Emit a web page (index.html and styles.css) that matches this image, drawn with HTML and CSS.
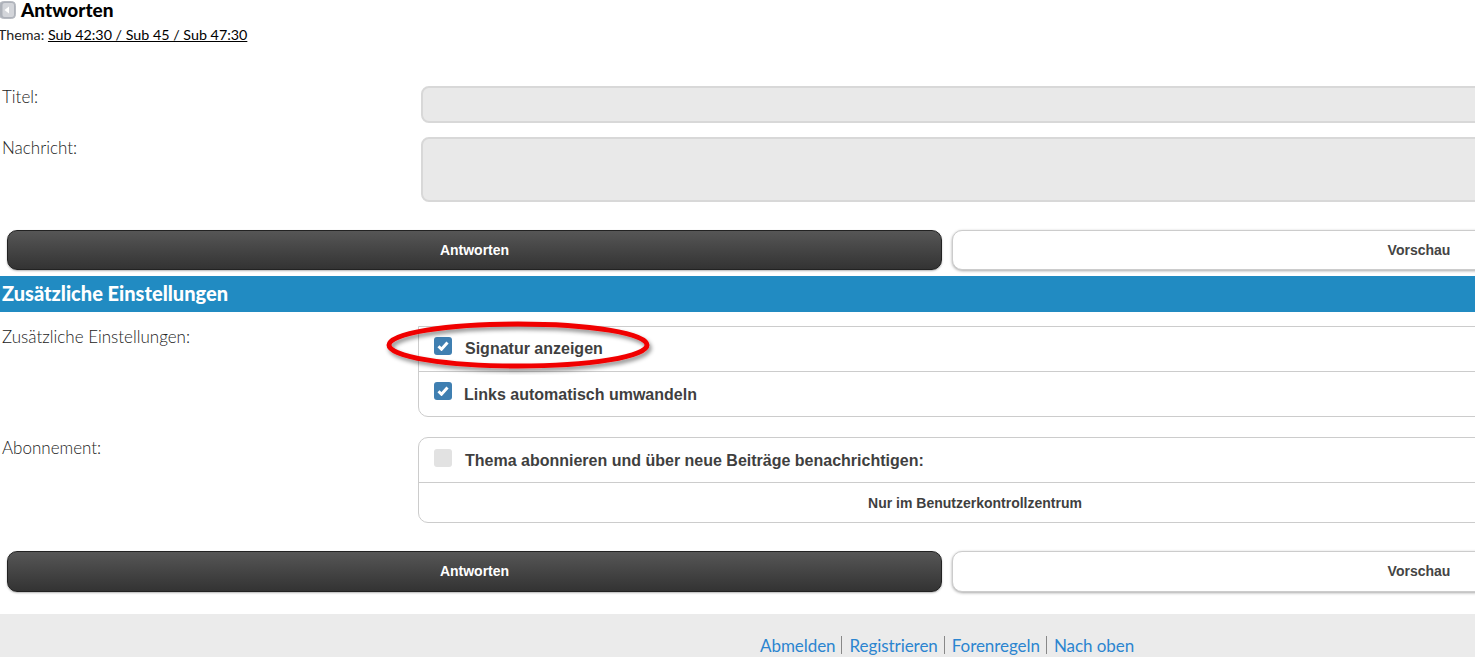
FILE: index.html

```html
<!DOCTYPE html>
<html lang="de">
<head>
  <meta charset="UTF-8" />
  <title>Antworten</title>
  <link rel="stylesheet" href="styles.css">
</head>
<body>
  <div class="page">
    <div class="head">
      <svg class="back-icon" width="18" height="18" viewBox="0 0 18 18">
        <rect x="0.5" y="0.5" width="16" height="17" rx="4" fill="#adb1b9" stroke="#b8bbc2"/>
        <rect x="3.5" y="2" width="11.5" height="14" rx="2" fill="#d3d5da"/>
        <path d="M10 5.5v7L5.5 9z" fill="#fff"/>
      </svg>
      <h1>Antworten</h1>
    </div>
    <div class="topic">Thema: <a href="#">Sub 42:30 / Sub 45 / Sub 47:30</a></div>

    <form class="reply">
      <div class="field field-title">
        <label>Titel:</label>
        <div class="input input-title"></div>
      </div>
      <div class="field field-msg">
        <label>Nachricht:</label>
        <div class="input input-msg"></div>
      </div>

      <div class="actions actions-top">
        <button type="button" class="btn btn-dark">Antworten</button>
        <button type="button" class="btn btn-light">Vorschau</button>
      </div>

      <h2 class="section">Zusätzliche Einstellungen</h2>

      <div class="opt-row opt-row-first">
        <label>Zusätzliche Einstellungen:</label>
        <div class="opt-box opt-box-open">
          <div class="opt opt-sig">
            <span class="check"><svg width="12" height="10" viewBox="0 0 12 10"><path d="M1.5 5.2l3 3L10.5 1.6" fill="none" stroke="#fff" stroke-width="3"/></svg></span>
            <span class="opt-text">Signatur anzeigen</span>
            <svg class="ring" width="272" height="56" viewBox="0 0 272 56">
              <defs>
                <filter id="ringShadow" x="-5%" y="-20%" width="110%" height="150%">
                  <feDropShadow dx="2" dy="3" stdDeviation="2" flood-color="#000" flood-opacity="0.45"/>
                </filter>
              </defs>
              <ellipse cx="134" cy="26" rx="129" ry="21" fill="none" stroke="#f00000" stroke-width="5" filter="url(#ringShadow)"/>
            </svg>
          </div>
          <div class="opt opt-links">
            <span class="check"><svg width="12" height="10" viewBox="0 0 12 10"><path d="M1.5 5.2l3 3L10.5 1.6" fill="none" stroke="#fff" stroke-width="3"/></svg></span>
            <span class="opt-text opt-text-tight">Links automatisch umwandeln</span>
          </div>
        </div>
      </div>

      <div class="opt-row opt-row-second">
        <label>Abonnement:</label>
        <div class="opt-box">
          <div class="opt opt-sub">
            <span class="check check-off"></span>
            <span class="opt-text opt-text-low">Thema abonnieren und über neue Beiträge benachrichtigen:</span>
          </div>
          <div class="opt-note">Nur im Benutzerkontrollzentrum</div>
        </div>
      </div>

      <div class="actions actions-bottom">
        <button type="button" class="btn btn-dark btn-up">Antworten</button>
        <button type="button" class="btn btn-light btn-up">Vorschau</button>
      </div>
    </form>
  </div>

  <div class="footer">
    <a href="#">Abmelden</a><a href="#">Registrieren</a><a href="#">Forenregeln</a><a href="#">Nach oben</a>
  </div>
</body>
</html>
```

FILE: styles.css

```css
* { margin: 0; padding: 0; box-sizing: border-box; }
html, body { height: 657px; overflow: hidden; }
body { background: #fff; color: #333; font-family: "Lato", "Liberation Sans", sans-serif; width: 1475px; }
.page { width: 1900px; height: 614px; }

.head { display: flex; align-items: center; height: 20px; margin-left: -1px; gap: 4px; }
.back-icon { flex: none; }
h1 { font-size: 19px; font-weight: 900; color: #000; line-height: 20px; }
.topic { font-size: 14.3px; line-height: 16px; margin-top: 7px; margin-left: -2px; color: #222; }
.topic a { color: #000; text-decoration: underline; }

.field { display: flex; }
.field label { width: 421px; flex: none; font-size: 17px; font-weight: 300; padding: 1px 0 0 2px; color: #222; line-height: 20px; }
.field-title { margin-top: 43px; }
.field-msg { margin-top: 14px; }
.input { flex: 1; background: #e9e9e9; border: 2px solid #d8d8d8; border-radius: 8px; }
.input-title { height: 37px; }
.input-msg { height: 65px; }

.actions { display: flex; gap: 10px; padding-left: 7px; }
.actions-top { margin-top: 28px; height: 40px; }
.actions-bottom { margin-top: 28px; height: 41px; }
.btn { font-family: "Liberation Sans", sans-serif; font-size: 14px; font-weight: 700; border-radius: 10px; cursor: pointer; }
.btn-up { padding-bottom: 2px; }
.btn-dark { width: 935px; color: #fff; border: 1px solid #222; background: linear-gradient(#565656, #333); box-shadow: 0 1px 2px rgba(0,0,0,.3); }
.btn-light { width: 934px; color: #444; border: 1px solid #ccc; background: #fff; box-shadow: 0 1px 3px rgba(0,0,0,.35); }

.section { margin-top: 6px; height: 36px; line-height: 35px; background: #218bc2; color: #fff; font-size: 20px; font-weight: 900; padding-left: 2px; }

.opt-row { display: flex; }
.opt-row > label { width: 418px; flex: none; font-size: 17px; font-weight: 300; padding: 1px 0 0 2px; color: #222; line-height: 20px; }
.opt-row-first { margin-top: 14px; }
.opt-row-second { margin-top: 20px; }
.opt-box { flex: 1; border: 1px solid #ccc; border-radius: 10px; font-family: "Liberation Sans", sans-serif; }
.opt-box-open { border-radius: 0 0 0 10px; }
.opt { position: relative; display: flex; align-items: center; padding-left: 15px; }
.opt-sig { height: 45px; border-bottom: 1px solid #ccc; }
.opt-links { height: 44px; }
.opt-sub { height: 45px; border-bottom: 1px solid #ccc; }
.opt-text { font-size: 16px; font-weight: 700; color: #3f3f3f; margin-left: 13px; }
.opt-text-tight { margin-left: 12px; padding-top: 2px; }
.opt-text-low { padding-top: 2px; }
.check { width: 18px; height: 18px; flex: none; border-radius: 3px; background: #3f7fb1; display: flex; align-items: center; justify-content: center; margin-top: -7px; }
.check-off { background: #e2e2e2; margin-top: -5px; }
.opt-note { width: 1112px; height: 39px; line-height: 40px; text-align: center; font-size: 14px; font-weight: 700; color: #3f3f3f; }

.ring { position: absolute; left: -35px; top: -8px; }

.footer { height: 43px; background: #ebebeb; padding: 22px 0 0 760px; display: flex; font-size: 17px; line-height: 20px; }
.footer a { color: #2b85d0; text-decoration: none; padding-right: 6px; margin-right: 7px; border-right: 1px solid #888; height: 18px; line-height: 20px; letter-spacing: -0.06px; }
.footer a:last-child { border-right: none; }
```
